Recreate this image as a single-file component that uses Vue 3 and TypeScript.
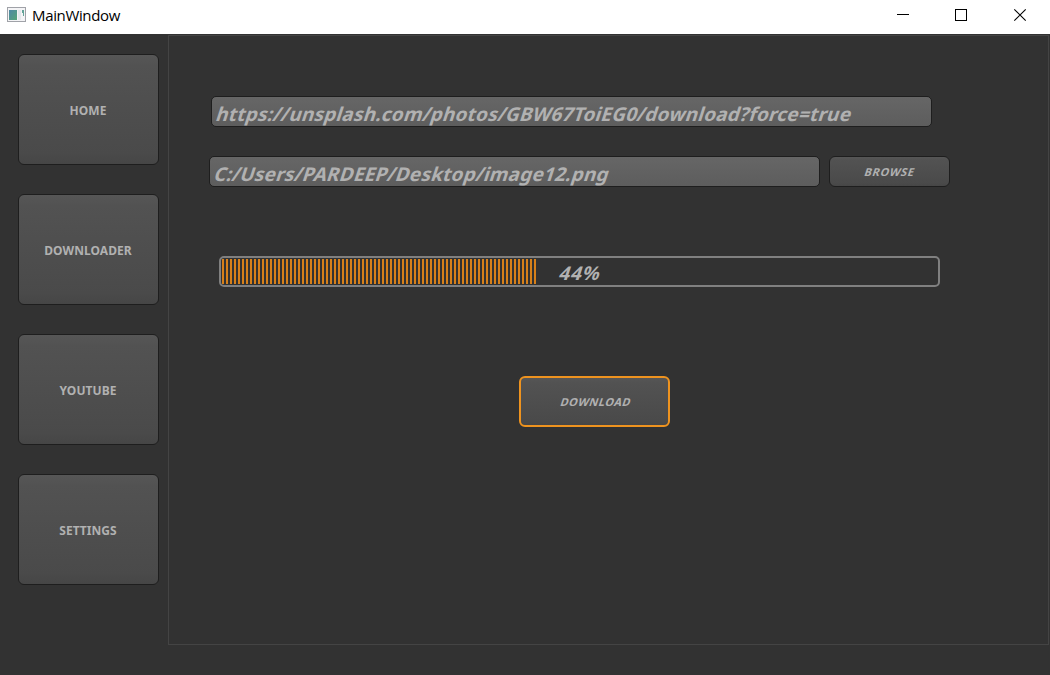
<script setup lang="ts">
import { ref } from 'vue'

const pages = ['Home', 'Downloader', 'YouTube', 'Settings']
const url = ref('https://unsplash.com/photos/GBW67ToiEG0/download?force=true')
const target = ref('C:/Users/PARDEEP/Desktop/image12.png')
const progress = ref(44)
</script>

<template>
  <div class="window">
    <header class="titlebar">
      <svg class="app-icon" width="19" height="15" viewBox="0 0 19 15">
        <defs>
          <linearGradient id="pane" x1="0" y1="0" x2="1" y2="1">
            <stop offset="0" stop-color="#4f88a6" />
            <stop offset="1" stop-color="#55a578" />
          </linearGradient>
        </defs>
        <rect x="0.5" y="0.5" width="18" height="14" fill="#f4f4f6" stroke="#a0a2a8" />
        <rect x="2" y="3" width="8" height="10" fill="url(#pane)" />
        <rect x="11" y="3" width="3" height="10" fill="#e4e8ec" />
        <path d="M15 3h2v6h-1v-3h-1z" fill="#62a398" />
      </svg>
      <span class="title">MainWindow</span>
      <svg class="controls" width="140" height="34" viewBox="0 0 140 34" fill="none" stroke="#000" shape-rendering="crispEdges">
        <path d="M7 14.5h12" />
        <rect x="65.5" y="9.5" width="11" height="11" />
        <path d="M124.3 9.3l11.4 11.4M135.7 9.3l-11.4 11.4" stroke-width="1.1" shape-rendering="auto" />
      </svg>
    </header>
    <div class="body">
      <nav class="sidebar">
        <button v-for="page in pages" :key="page" class="btn nav-btn">
          <span>{{ page.toUpperCase() }}</span>
        </button>
      </nav>
      <main class="panel">
        <div class="field url"><span class="slanted">{{ url }}</span></div>
        <div class="file-row">
          <div class="field path"><span class="slanted">{{ target }}</span></div>
          <button class="btn browse"><span class="slanted">BROWSE</span></button>
        </div>
        <div class="progress">
          <div class="chunks" :style="{ width: progress + '%' }"></div>
          <div class="percent"><span class="slanted">{{ progress }}%</span></div>
        </div>
        <button class="btn download"><span class="slanted">DOWNLOAD</span></button>
      </main>
    </div>
  </div>
</template>

<style>
body {
  margin: 0;
  overflow: hidden;
  background: #323232;
}
</style>

<style scoped>
* {
  box-sizing: border-box;
}
.window {
  width: 1050px;
  height: 675px;
  display: flex;
  flex-direction: column;
  background: #323232;
  color: #b1b1b1;
  font-family: 'Noto Sans', 'Open Sans', sans-serif;
}
.slanted {
  display: inline-block;
  transform: skewX(-18deg);
}
.titlebar {
  height: 34px;
  flex: none;
  display: flex;
  background: #fff;
  color: #000;
}
.app-icon {
  margin: 7px 0 0 7px;
}
.title {
  margin-left: 6px;
  font-family: 'Open Sans', sans-serif;
  font-size: 15px;
  line-height: 30px;
  letter-spacing: -0.35px;
}
.controls {
  margin-left: auto;
  margin-right: 20px;
}
.body {
  flex: 1;
  display: flex;
}
.sidebar {
  width: 168px;
  padding: 20px 0 0 18px;
  display: flex;
  flex-direction: column;
  gap: 29px;
}
.btn {
  padding: 0;
  display: flex;
  align-items: center;
  justify-content: center;
  border: 1px solid #1e1e1e;
  border-radius: 6px;
  background: linear-gradient(#565656, #525252 10%, #4e4e4e 50%, #4a4a4a 90%, #464646);
  color: #b1b1b1;
  font-family: inherit;
  font-weight: 700;
  font-size: 12px;
  white-space: nowrap;
}
.nav-btn {
  width: 141px;
  height: 111px;
  padding: 2px 1px 0 0;
  letter-spacing: 0.05px;
}
.panel {
  width: 881px;
  height: 610px;
  margin-top: 1px;
  padding: 60px 0 0 40px;
  border: 1px solid #444;
  display: flex;
  flex-direction: column;
}
.field {
  height: 31px;
  padding-left: 5px;
  border: 1px solid #1e1e1e;
  border-radius: 5px;
  background: linear-gradient(#666, #5d5d5d);
  font-size: 19px;
  font-weight: 700;
  line-height: 34px;
  letter-spacing: 0.21px;
  white-space: nowrap;
  overflow: hidden;
}
.url {
  width: 721px;
  margin-left: 2px;
}
.file-row {
  display: flex;
  gap: 9px;
  margin-top: 29px;
}
.path {
  width: 611px;
}
.browse {
  width: 121px;
  height: 31px;
  padding-left: 1px;
  font-size: 11px;
  letter-spacing: 0.7px;
}
.progress {
  position: relative;
  width: 721px;
  height: 31px;
  margin: 69px 0 0 10px;
  padding: 1px;
  border: 2px solid #808080;
  border-radius: 5px;
}
.chunks {
  height: 25px;
  background: repeating-linear-gradient(90deg, #d7801a 0 2px, transparent 2px 4px);
}
.percent {
  position: absolute;
  inset: 0;
  padding-left: 2px;
  text-align: center;
  font-size: 19px;
  font-weight: 700;
  line-height: 30px;
  letter-spacing: 0.8px;
}
.download {
  width: 151px;
  height: 51px;
  margin: 89px 0 0 310px;
  padding-left: 3px;
  border: 2px solid #ee931f;
  font-size: 11px;
  letter-spacing: 0.5px;
}
</style>
